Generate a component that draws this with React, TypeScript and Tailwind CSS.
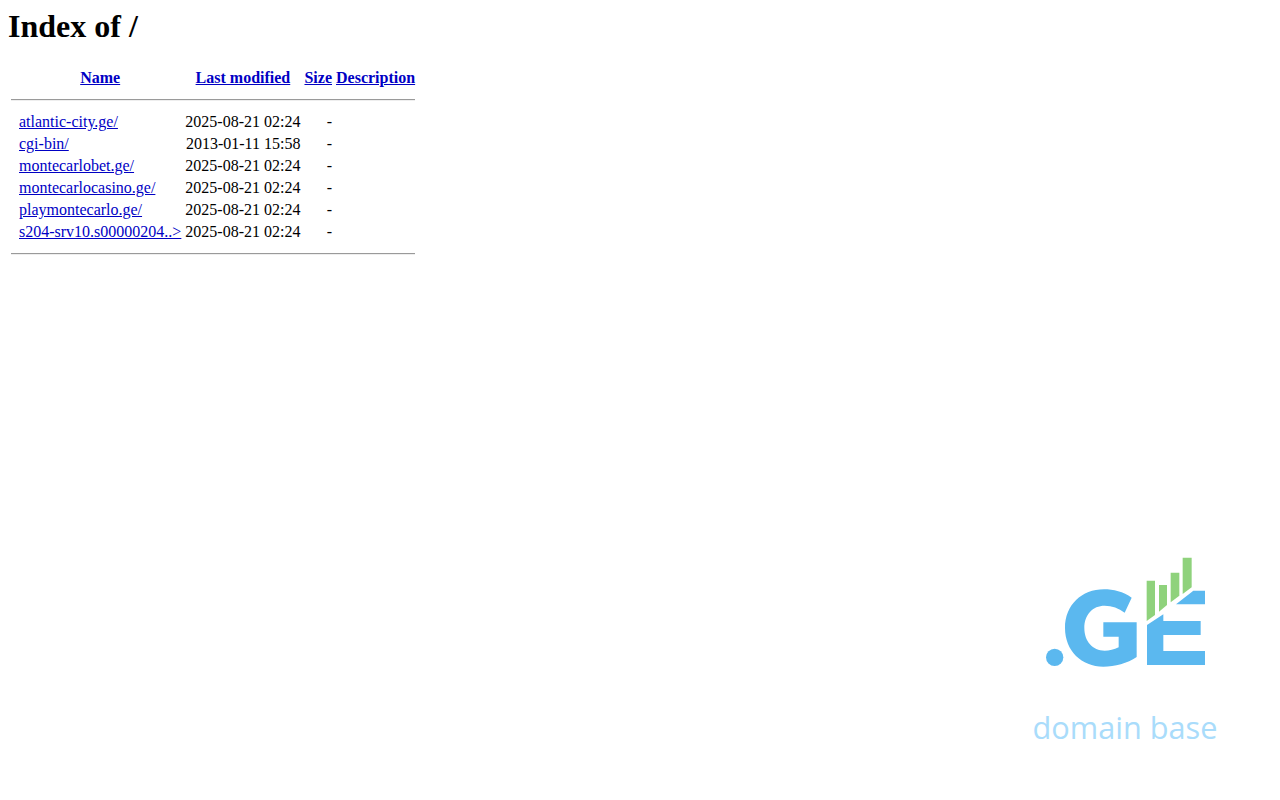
const rows = [
  { name: 'atlantic-city.ge/', date: '2025-08-21 02:24' },
  { name: 'cgi-bin/', date: '2013-01-11 15:58' },
  { name: 'montecarlobet.ge/', date: '2025-08-21 02:24' },
  { name: 'montecarlocasino.ge/', date: '2025-08-21 02:24' },
  { name: 'playmontecarlo.ge/', date: '2025-08-21 02:24' },
  { name: 's204-srv10.s00000204..>', date: '2025-08-21 02:24' },
];

const linkClass = 'text-[#0000c4] underline';

function Rule() {
  return (
    <tr>
      <th colSpan={5} className="p-px">
        <hr className="my-2 border-t border-b border-t-[#9a9a9a] border-b-[#eeeeee]" />
      </th>
    </tr>
  );
}

function Logo() {
  return (
    <div className="absolute left-[1020px] top-[545px] flex w-[210px] flex-col items-center">
      <svg width="210" height="135" viewBox="0 0 630 405">
        <circle cx="104" cy="337" r="26" fill="#5bb8ef" />
        <path
          fill="#5bb8ef"
          d="M335 158C310 140 280 133 252 133C185 133 135 180 135 249C135 318 185 365 250 365C285 365 322 355 350 336L350 232L250 232L250 275L296 275L296 307C282 314 268 317 254 317C218 317 193 289 193 249C193 209 218 182 254 182C276 182 296 189 314 203Z"
        />
        <path
          fill="#5bb8ef"
          d="M381 240L430 208L430 228L542 228L542 270L430 270L430 318L555 318L555 360L381 360Z"
        />
        <path fill="#5bb8ef" d="M468 178L520 137L555 137L555 178Z" />
        <path fill="#8fd27c" d="M380 107L405 107L405 210L380 228Z" />
        <path fill="#8fd27c" d="M417 120L441 120L441 180L417 200Z" />
        <path fill="#8fd27c" d="M452 83L478 83L478 152L452 172Z" />
        <path fill="#8fd27c" d="M488 38L515 38L515 127L488 147Z" />
      </svg>
      <div className="mt-[25px] font-['Open_Sans',sans-serif] text-[30.7px] leading-[44px] text-[#a9dcfb]">
        domain base
      </div>
    </div>
  );
}

export default function App() {
  return (
    <div className="relative h-[800px] overflow-hidden bg-white px-2 pt-2 font-['Liberation_Serif',serif] text-base leading-[18px] text-black">
      <h1 className="mb-[21.44px] text-[32px] leading-[37px] font-bold">Index of /</h1>
      <table className="border-separate border-spacing-[2px]">
        <tbody>
          <tr>
            <th className="w-[6px] p-px"></th>
            <th className="p-px">
              <a className={linkClass}>Name</a>
            </th>
            <th className="p-px">
              <a className={linkClass}>Last modified</a>
            </th>
            <th className="p-px">
              <a className={linkClass}>Size</a>
            </th>
            <th className="p-px">
              <a className={linkClass}>Description</a>
            </th>
          </tr>
          <Rule />
          {rows.map((row) => (
            <tr key={row.name}>
              <td className="p-px"></td>
              <td className="p-px">
                <a className={linkClass}>{row.name}</a>
              </td>
              <td className="p-px text-right">{row.date}</td>
              <td className="p-px text-right">- </td>
              <td className="p-px"></td>
            </tr>
          ))}
          <Rule />
        </tbody>
      </table>
      <Logo />
    </div>
  );
}
